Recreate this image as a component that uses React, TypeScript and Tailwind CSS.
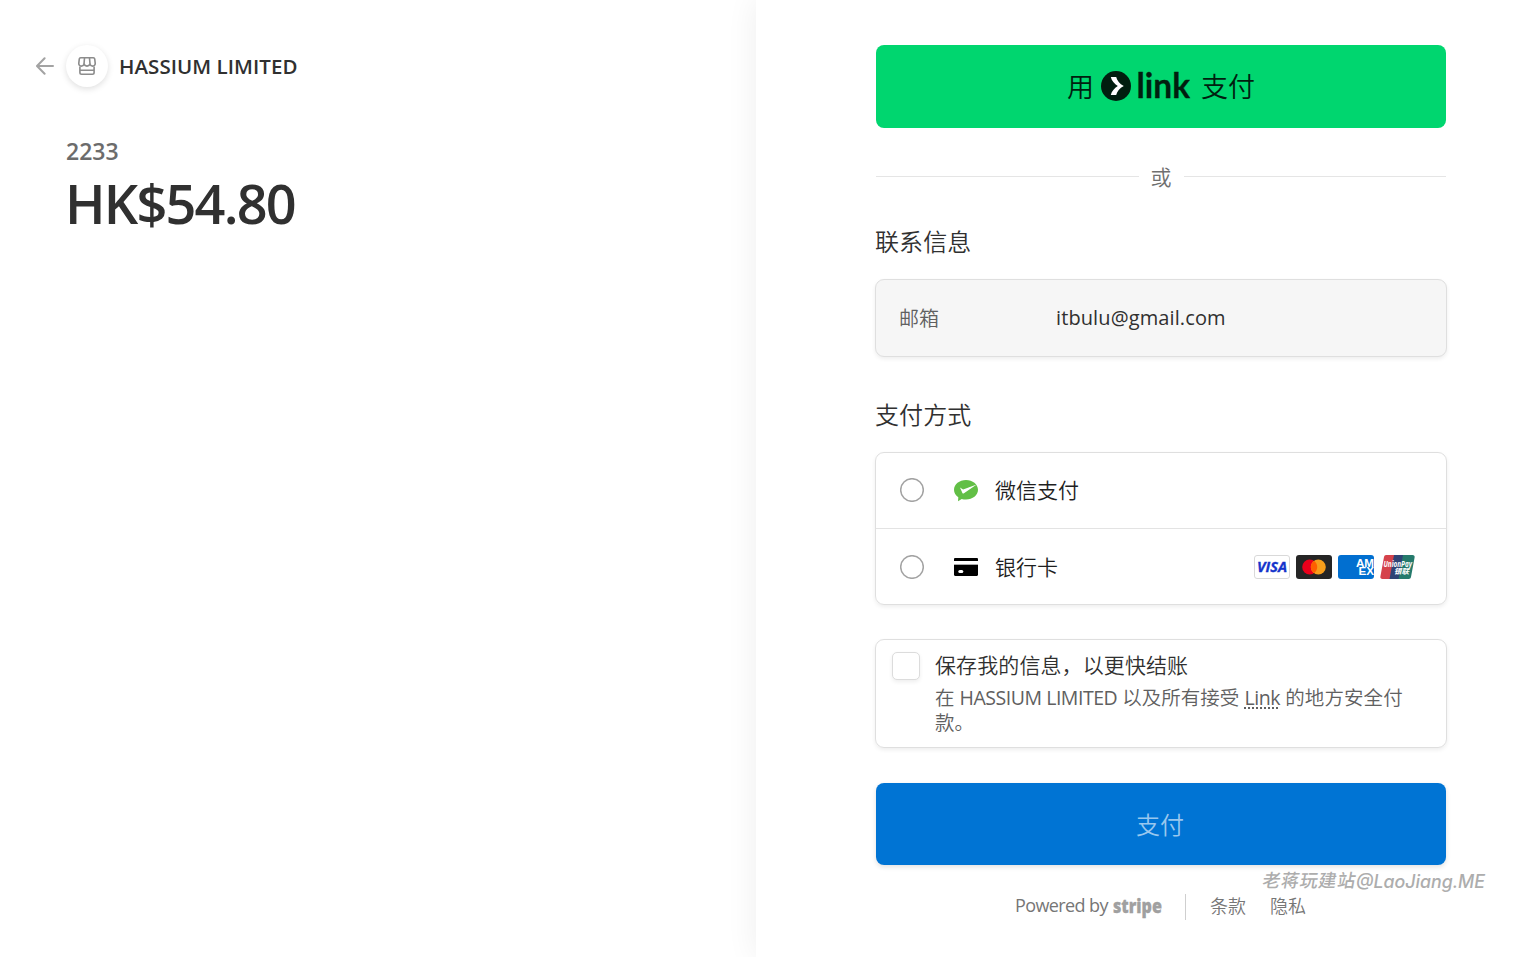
import type { ReactNode } from "react";

const cards = [
  { name: "visa", icon: <VisaIcon /> },
  { name: "mastercard", icon: <MastercardIcon /> },
  { name: "amex", icon: <AmexIcon /> },
  { name: "unionpay", icon: <UnionPayIcon /> },
];

function BackArrow() {
  return (
    <svg width="18" height="18" viewBox="0 0 18 18" fill="none" stroke="#a3a3a3" strokeWidth="2" strokeLinecap="round" strokeLinejoin="round">
      <path d="M17 9H1.300M8.600 1.200L1 9l7.600 7.800" />
    </svg>
  );
}

function StoreIcon() {
  return (
    <svg width="18" height="18" viewBox="0 0 18 18" fill="none" stroke="#8c8c8c" strokeWidth="1.600" strokeLinejoin="round">
      <path d="M2.600.8h12.800c.7 0 1.200.5 1.300 1.100l.5 4.300c.1 1.700-1 2.900-2.500 2.900-1.200 0-2.300-.8-2.700-1.900C11.500 8.300 10.400 9.100 9 9.100S6.500 8.300 6 7.200C5.600 8.300 4.500 9.100 3.300 9.100 1.800 9.100.7 7.900.8 6.200l.5-4.300C1.400 1.300 1.900.8 2.600.8z" />
      <path d="M6.500 1L6 7M11.500 1l.5 6M1.900 9.500v6c0 1 .7 1.700 1.700 1.700h10.800c1 0 1.700-.7 1.700-1.700v-6M1.900 13.300h14.200" />
    </svg>
  );
}

function LinkLogo() {
  return (
    <svg width="92" height="44" viewBox="0 -5 92 44" className="shrink-0">
      <circle cx="15" cy="16" r="15" fill="#011e0f" />
      <path d="M9.800 7h5.400c.8 3.600 3.400 6.700 7.600 9-4.200 2.300-6.800 5.400-7.600 9H9.800c.8-3.800 3.600-6.800 7-9-3.400-2.200-6.200-5.200-7-9z" fill="#fff" />
      <text x="35.500" y="28" textLength="53.500" lengthAdjust="spacingAndGlyphs" fill="#011e0f" stroke="#011e0f" strokeWidth=".3" className="font-['Lato'] text-[34px] font-bold">
        link
      </text>
    </svg>
  );
}

function WechatPayIcon() {
  return (
    <svg width="24" height="22" viewBox="0 0 24 22">
      <path d="M12 0c6.600 0 12 4.400 12 9.800s-5.400 9.800-12 9.800c-1.500 0-3-.2-4.300-.6L4 21.300l.3-4C1.700 15.500 0 12.800 0 9.800 0 4.400 5.400 0 12 0z" fill="#62bf46" />
      <path d="M6 7.500l3.100 2L22.700 4.600 9.600 13.400c-.5.300-.9.200-1.200-.4z" fill="#fff" />
    </svg>
  );
}

function CardIcon() {
  return (
    <svg width="24" height="18" viewBox="0 0 24 18">
      <path d="M1.200 0h21.600c.7 0 1.200.5 1.200 1.200V3H0V1.200C0 .5.500 0 1.200 0zM0 7h24v9.800c0 .7-.5 1.200-1.200 1.200H1.200C.5 18 0 17.500 0 16.800z" />
      <path d="M0 6h24v1H0z" fill="#aaa" />
      <rect x="4.300" y="12" width="5" height="3" rx="1.500" fill="#fff" />
    </svg>
  );
}

function VisaIcon() {
  return (
    <svg width="36" height="24" viewBox="0 0 36 24">
      <rect x=".5" y=".5" width="35" height="23" rx="2.500" fill="#fff" stroke="#d9d9d9" />
      <text x="3" y="17" textLength="30" lengthAdjust="spacingAndGlyphs" fill="#1434cb" stroke="#1434cb" strokeWidth=".3" className="font-['Open_Sans'] text-[13.500px] font-bold italic">
        VISA
      </text>
    </svg>
  );
}

function MastercardIcon() {
  return (
    <svg width="36" height="24" viewBox="0 0 36 24">
      <rect width="36" height="24" rx="3" fill="#252525" />
      <circle cx="13.700" cy="12" r="7.500" fill="#eb001b" />
      <circle cx="22.300" cy="12" r="7.500" fill="#f79e1b" />
      <path d="M18 5.850a7.500 7.500 0 010 12.300 7.500 7.500 0 010-12.300z" fill="#ff5f00" />
    </svg>
  );
}

function AmexIcon() {
  return (
    <svg width="36" height="24" viewBox="0 0 36 24">
      <rect width="36" height="24" rx="3" fill="#016fd0" />
      <g fill="#fff" className="font-['Liberation_Sans'] text-[11.500px] font-bold">
        <text x="18" y="11.900" textLength="18" lengthAdjust="spacingAndGlyphs">
          AM
        </text>
        <text x="20.500" y="20.200" textLength="15.500" lengthAdjust="spacingAndGlyphs">
          EX
        </text>
      </g>
    </svg>
  );
}

function UnionPayIcon() {
  return (
    <svg width="36" height="24" viewBox="0 0 36 24">
      <path d="M6 0h9l-4.500 24H2.500C1 24 0 23 .4 21.500L4 2C4.300.7 5 0 6 0z" fill="#d5424b" />
      <path d="M14 0h10l-4.500 24h-10z" fill="#2f4375" />
      <path d="M23 0h9.500C34 0 35 1 34.600 2.500L31 22c-.3 1.300-1 2-2.200 2H18.500z" fill="#257a6c" />
      <text x="3.500" y="11.800" textLength="28.500" lengthAdjust="spacingAndGlyphs" fill="#fff" className="font-['Open_Sans'] text-[8px] font-bold italic">
        UnionPay
      </text>
      <text x="14" y="19.300" textLength="15" lengthAdjust="spacingAndGlyphs" fill="#fff" className="font-['Noto_Sans_CJK_SC'] text-[7.500px] font-bold italic">
        银联
      </text>
    </svg>
  );
}

function Radio() {
  return (
    <svg width="24" height="24" viewBox="0 0 24 24" className="shrink-0">
      <circle cx="12" cy="12" r="11.300" fill="#fff" stroke="#a3a3a3" strokeWidth="1.500" />
    </svg>
  );
}

function Panel({ children, className = "" }: { children: ReactNode; className?: string }) {
  return (
    <div className={`-mx-px rounded-[9px] border border-[#dfdfdf] shadow-[0_2px_4px_rgba(0,0,0,0.07)] ${className}`}>
      {children}
    </div>
  );
}

function Summary() {
  return (
    <section className="w-[756px] shrink-0 pl-9 pt-[45px]">
      <header className="flex h-[42px] items-center">
        <BackArrow />
        <span className="ml-3 flex size-[42px] items-center justify-center rounded-full bg-white shadow-[0_2px_6px_rgba(0,0,0,0.13)]">
          <StoreIcon />
        </span>
        <h1 className="ml-[11px] whitespace-nowrap text-[20.500px] font-semibold tracking-[0.05px] text-[#303030]">HASSIUM LIMITED</h1>
      </header>
      <div className="ml-[30px] mt-[48px]">
        <p className="text-[23px] font-semibold leading-[32px] text-[#6c6c6c]">2233</p>
        <p className="-ml-px mt-[6px] text-[54px] font-semibold leading-[60px] tracking-[-1.8px] text-[#303030]">HK$54.80</p>
      </div>
    </section>
  );
}

function Checkout() {
  return (
    <section className="flex-1 bg-white pl-[120px] pt-[45px] shadow-[0_0_30px_rgba(0,0,0,0.07)]">
      <div className="w-[570px]">
        <button className="flex h-[83px] w-full items-center justify-center rounded-lg bg-[#00d66f] text-[27px] font-[350] text-[#011e0f]">
          <span className="mt-[2px]">用</span>
          <span className="ml-[7px] mr-[8px]">
            <LinkLogo />
          </span>
          <span className="mt-[2px]">支付</span>
        </button>

        <div className="mt-[33px] flex h-[30px] items-center gap-3 text-[21px] font-[350] text-[#6f6f6f]">
          <span className="h-px flex-1 bg-[#e5e5e5]" />
          <span className="mt-[3px]">或</span>
          <span className="h-px flex-1 bg-[#e5e5e5]" />
        </div>

        <h2 className="-ml-px mt-[35px] text-[24px] font-[350] leading-[32px] tracking-[0.1px] text-[#303030]">联系信息</h2>
        <Panel className="mt-[21px] flex h-[78px] items-center bg-[#f6f6f6] pl-6 text-[20px]">
          <span className="-ml-px mt-[2px] w-[157px] font-[350] text-[#606060]">邮箱</span>
          <span className="tracking-[0.11px] text-[#303030]">itbulu@gmail.com</span>
        </Panel>

        <h2 className="-ml-px mt-[42px] text-[24px] font-[350] leading-[32px] tracking-[0.1px] text-[#303030]">支付方式</h2>
        <Panel className="mt-[21px] text-[21px] font-[350] text-[#1f1f1f]">
          <div className="flex h-[76px] items-center border-b border-[#e3e3e3] pl-6">
            <span className="mb-px">
              <Radio />
            </span>
            <span className="ml-[30px] mr-[17px]">
              <WechatPayIcon />
            </span>
            <span>微信支付</span>
          </div>
          <div className="flex h-[75px] items-center pl-6 pr-[30px]">
            <Radio />
            <span className="ml-[30px] mr-[17px]">
              <CardIcon />
            </span>
            <span className="mt-[2px]">银行卡</span>
            <div className="ml-auto flex gap-[6px]">
              {cards.map((card) => (
                <span key={card.name}>{card.icon}</span>
              ))}
            </div>
          </div>
        </Panel>

        <Panel className="mt-[34px] flex h-[109px] pl-4 pt-[12px]">
          <span className="size-7 shrink-0 rounded-[5px] border-[1.500px] border-[#dcdcdc] bg-white shadow-[0_2px_4px_rgba(0,0,0,0.07)]" />
          <div className="-mt-px ml-[15px] whitespace-nowrap">
            <p className="text-[21px] font-[350] leading-[28px] tracking-[0.1px] text-[#303030]">保存我的信息，以更快结账</p>
            <p className="mt-[6px] text-[19.500px] font-[350] leading-[25px] text-[#606060]">
              在 <span className="font-normal tracking-[-0.47px]">HASSIUM LIMITED</span> 以及所有接受{" "}
              <span className="font-normal tracking-[-0.4px] underline decoration-dotted decoration-2 underline-offset-2">Link</span>{" "}
              <span className="tracking-[0.1px]">的地方安全付</span>
              <br />
              款。
            </p>
          </div>
        </Panel>

        <button className="mt-[35px] flex h-[82px] w-full items-center justify-center rounded-lg bg-[#0074d4] pr-[2px] pt-px text-[24px] font-[350] text-[#99c7ee] shadow-[0_2px_5px_rgba(0,0,0,0.12)]">
          支付
        </button>

        <footer className="relative mt-[28px] flex h-[27px] items-center pl-[139px] text-[18px] text-[#767676]">
          <span className="mb-[2px] w-[93px] whitespace-nowrap tracking-[-0.6px]">Powered by</span>
          <svg width="52" height="36" viewBox="0 -4 52 36" className="ml-[5px]">
            <text x="0" y="20" textLength="49" lengthAdjust="spacingAndGlyphs" fill="#a0a0a0" stroke="#a0a0a0" strokeWidth=".3" className="font-['Open_Sans'] text-[19px] font-extrabold">
              stripe
            </text>
          </svg>
          <span className="ml-5 h-[26px] w-px bg-[#cfcfcf]" />
          <span className="ml-6 font-[350]">条款</span>
          <span className="ml-6 font-[350]">隐私</span>
          <svg width="226" height="28" viewBox="0 0 226 28" className="absolute left-[386px] top-[-26px]">
            <g fill="#adadad" className="font-['Inter','Noto_Sans_CJK_SC'] text-[18px] italic">
              <text x="0" y="20.500" textLength="93" className="font-medium not-italic" transform="skewX(-10) translate(3 0)">
                老蒋玩建站
              </text>
              <text x="94" y="20.500" textLength="129" lengthAdjust="spacingAndGlyphs" className="font-medium">
                @LaoJiang.ME
              </text>
            </g>
          </svg>
        </footer>
      </div>
    </section>
  );
}

export default function App() {
  return (
    <main className="flex h-[957px] overflow-hidden bg-white font-['Open_Sans','Noto_Sans_CJK_SC',sans-serif]">
      <Summary />
      <Checkout />
    </main>
  );
}
